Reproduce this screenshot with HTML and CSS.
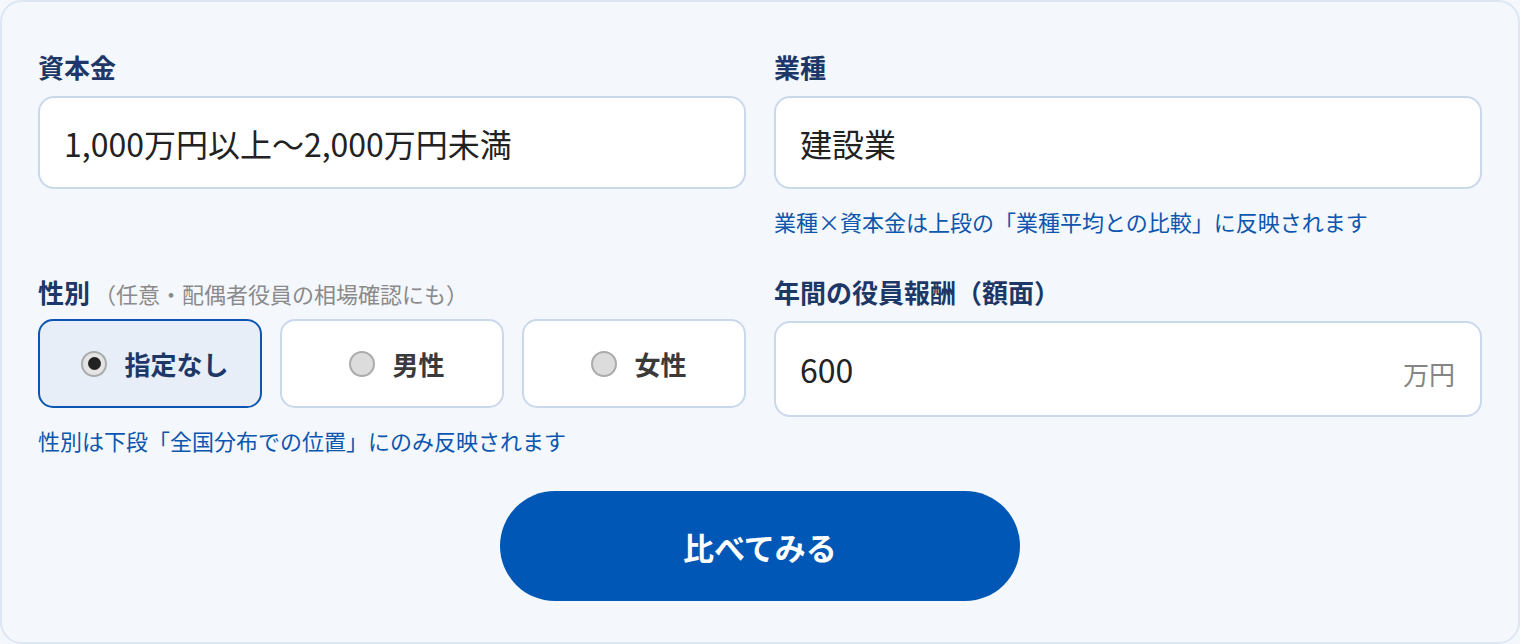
FILE: index.html
```html
<!DOCTYPE html>
<html lang="ja">
<head>
<meta charset="utf-8">
<title>役員報酬の比較</title>
<link rel="stylesheet" href="styles.css">
</head>
<body>
<form class="card">
  <div class="grid">
    <div class="field">
      <div class="label">資本金</div>
      <div class="box box-select">1,000万円以上〜2,000万円未満</div>
    </div>
    <div class="field">
      <div class="label">業種</div>
      <div class="box box-select">建設業</div>
      <p class="help">業種×資本金は上段の「業種平均との比較」に反映されます</p>
    </div>

    <div class="field field-row2">
      <div class="label">性別<span class="label-note">（任意・配偶者役員の相場確認にも）</span></div>
      <div class="choices">
        <label class="choice is-checked"><span class="dot"></span><span class="choice-text">指定なし</span></label>
        <label class="choice"><span class="dot"></span><span class="choice-text">男性</span></label>
        <label class="choice"><span class="dot"></span><span class="choice-text">女性</span></label>
      </div>
      <p class="help">性別は下段「全国分布での位置」にのみ反映されます</p>
    </div>
    <div class="field field-row2">
      <div class="label">年間の役員報酬（額面）</div>
      <div class="box box-amount"><span class="amount">600</span><span class="unit">万円</span></div>
    </div>
  </div>
  <div class="actions">
    <button type="button" class="submit">比べてみる</button>
  </div>
</form>
</body>
</html>
```

FILE: styles.css
```css
* {
  box-sizing: border-box;
}

html, body {
  margin: 0;
  padding: 0;
  background: #f4f7fc;
}

body {
  font-family: "Noto Sans CJK JP", "Noto Sans", sans-serif;
  width: 1520px;
  height: 644px;
}

.card {
  width: 1520px;
  height: 644px;
  border: 2px solid #dde6f3;
  border-radius: 22px;
  background: #f4f7fc;
  padding: 47px 36px 40px;
  display: flex;
  flex-direction: column;
}

.grid {
  display: grid;
  grid-template-columns: 1fr 1fr;
  column-gap: 28px;
  row-gap: 38px;
}

.field {
  display: flex;
  flex-direction: column;
}

.label {
  font-size: 26px;
  line-height: 36px;
  font-weight: 700;
  color: #1d3866;
  margin-bottom: 11px;
}

.field-row2 .label {
  margin-bottom: 8px;
}

.label-note {
  font-size: 22px;
  font-weight: 400;
  color: #8a8a8a;
  margin-left: 4px;
}

.box {
  background: #ffffff;
  border: 2px solid #cad8eb;
  border-radius: 16px;
  padding: 0 24px;
  display: flex;
  align-items: center;
  font-size: 32px;
  color: #222222;
}

.box-select {
  height: 93px;
}

.box-amount {
  height: 96px;
  margin-top: 3px;
  justify-content: space-between;
}

.unit {
  font-size: 26px;
  color: #858585;
  margin-top: 8px;
  margin-right: 1px;
}

.help {
  margin: 17px 0 0;
  font-size: 22px;
  line-height: 30px;
  color: #0b56ae;
}

.choices {
  display: grid;
  grid-template-columns: 1fr 1fr 1fr;
  column-gap: 18px;
}

.choice {
  height: 89px;
  background: #ffffff;
  border: 2px solid #cad8eb;
  border-radius: 15px;
  display: flex;
  align-items: center;
  justify-content: center;
  gap: 17px;
  padding-left: 10px;
  font-size: 26px;
  font-weight: 700;
  color: #3a3a3a;
}

.choice.is-checked {
  background: #e7eef8;
  border-color: #0b56b0;
  color: #1d3866;
}

.dot {
  width: 26px;
  height: 26px;
  border-radius: 50%;
  border: 2px solid #ababab;
  background: #dcdcdc;
  flex: none;
  display: flex;
  align-items: center;
  justify-content: center;
}

.is-checked .dot {
  background: #e4e4e4;
}

.is-checked .dot::after {
  content: "";
  width: 13px;
  height: 13px;
  border-radius: 50%;
  background: #222222;
}

.choice-text {
  line-height: 36px;
}

.actions {
  display: flex;
  justify-content: center;
  margin-top: 36px;
}

.submit {
  width: 520px;
  height: 110px;
  border: none;
  border-radius: 55px;
  background: #0057b5;
  color: #ffffff;
  font-family: "Noto Sans CJK JP", "Noto Sans", sans-serif;
  font-size: 31px;
  font-weight: 700;
  cursor: pointer;
}
```
